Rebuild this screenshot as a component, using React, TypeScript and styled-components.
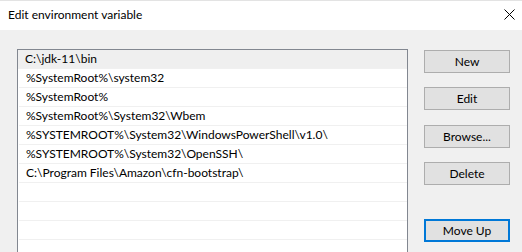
import React from 'react'
import styled, { createGlobalStyle } from 'styled-components'

const GlobalStyle = createGlobalStyle`
  html, body {
    margin: 0;
    padding: 0;
    background: #f0f0f0;
    overflow: hidden;
  }
  body {
    font-family: 'Lato', 'Noto Sans', sans-serif;
    font-size: 12px;
    color: #000;
  }
`

const PATHS = [
  'C:\\jdk-11\\bin',
  '%SystemRoot%\\system32',
  '%SystemRoot%',
  '%SystemRoot%\\System32\\Wbem',
  '%SYSTEMROOT%\\System32\\WindowsPowerShell\\v1.0\\',
  '%SYSTEMROOT%\\System32\\OpenSSH\\',
  'C:\\Program Files\\Amazon\\cfn-bootstrap\\',
  '',
  '',
  '',
  '',
]

const Window = styled.div`
  width: 522px;
  height: 252px;
  display: flex;
  flex-direction: column;
  background: #f0f0f0;
  border-top: 1px solid #e3e3e3;
  box-sizing: border-box;
  overflow: hidden;
`

const TitleBar = styled.div`
  height: 29px;
  background: #fff;
  display: flex;
  align-items: center;
  justify-content: space-between;
  padding: 0 0 0 8px;
  flex-shrink: 0;
`

const Title = styled.span`
  font-size: 12px;
  margin-top: -2px;
`

const CloseButton = styled.div`
  width: 24px;
  height: 24px;
  display: flex;
  align-items: center;
  justify-content: center;
  margin-right: 1px;
  margin-top: -2px;
`

const Body = styled.div`
  flex: 1;
  display: flex;
  padding: 19px 12px 0 17px;
  gap: 16px;
  min-height: 0;
  overflow: hidden;
`

const ListBox = styled.div`
  width: 391px;
  height: 240px;
  border: 1px solid #828790;
  background: #fff;
  box-sizing: border-box;
  flex-shrink: 0;
`

const Row = styled.div<{ $selected?: boolean }>`
  height: 19px;
  box-sizing: border-box;
  display: flex;
  align-items: center;
  padding-left: 7px;
  margin-left: ${p => (p.$selected ? 0 : 1)}px;
  background: ${p => (p.$selected ? '#efefef' : '#fff')};
  border-bottom: 1px solid #f0f0f0;
  white-space: nowrap;
  padding-bottom: 1px;
`

const ButtonColumn = styled.div`
  display: flex;
  flex-direction: column;
  padding-top: 1px;
`

const Button = styled.div<{ $gap: number; $focused?: boolean }>`
  width: 86px;
  height: 23px;
  box-sizing: border-box;
  margin-top: ${p => p.$gap}px;
  background: #e1e1e1;
  border: ${p => (p.$focused ? '2px solid #0078d7' : '1px solid #adadad')};
  display: flex;
  align-items: center;
  justify-content: center;
  padding-bottom: 1px;
`

const BUTTONS = [
  { label: 'New', gap: 0 },
  { label: 'Edit', gap: 14 },
  { label: 'Browse...', gap: 15 },
  { label: 'Delete', gap: 14 },
  { label: 'Move Up', gap: 34, focused: true },
]

export default function App() {
  return (
    <>
      <GlobalStyle />
      <Window>
        <TitleBar>
          <Title>Edit environment variable</Title>
          <CloseButton>
            <svg width="11" height="11" viewBox="0 0 11 11">
              <path d="M0.5 0.5 L10.5 10.5 M10.5 0.5 L0.5 10.5" stroke="#000" strokeWidth="1" fill="none" />
            </svg>
          </CloseButton>
        </TitleBar>
        <Body>
          <ListBox>
            {PATHS.map((p, i) => (
              <Row key={i} $selected={i === 0}>{p}</Row>
            ))}
          </ListBox>
          <ButtonColumn>
            {BUTTONS.map(b => (
              <Button key={b.label} $gap={b.gap} $focused={b.focused}>{b.label}</Button>
            ))}
          </ButtonColumn>
        </Body>
      </Window>
    </>
  )
}
